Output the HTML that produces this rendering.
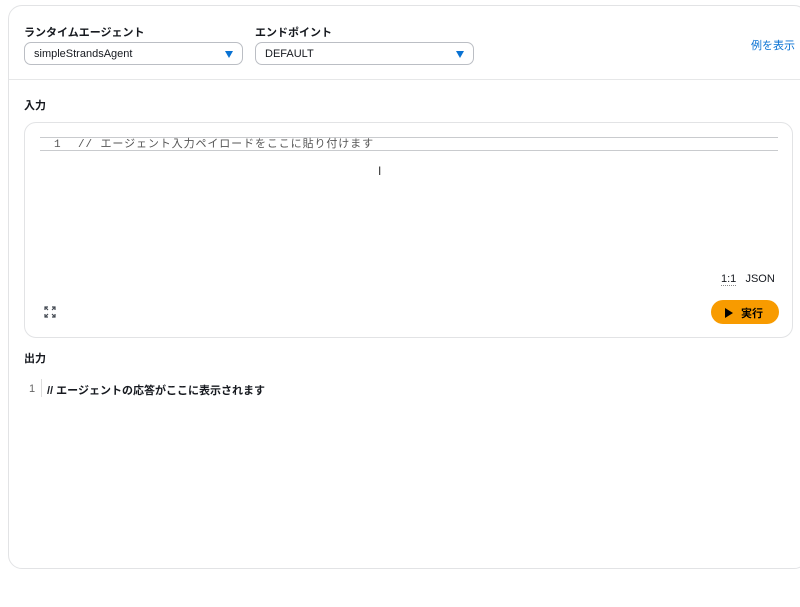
<!DOCTYPE html>
<html><head><meta charset="utf-8"><style>
*{box-sizing:border-box;margin:0;padding:0}
body{width:800px;height:607px;background:#fff;font-family:"Liberation Sans","Noto Sans CJK JP",sans-serif;color:#16191f;position:relative;overflow:hidden}
.card{position:absolute;left:8px;top:5px;width:800px;height:564px;border:1px solid #e2e3e5;border-radius:14px;background:#fff}
.hdr{position:absolute;left:0;top:0;right:0;height:74px;border-bottom:1px solid #e6e7e8}
.lbl{position:absolute;font-size:11px;font-weight:bold;color:#16191f}
.sel{position:absolute;height:23px;border:1px solid #bbbec4;border-radius:7px;font-size:11px;padding:5px 9px;background:#fff}
.tri{position:absolute;right:9px;top:8px;width:0;height:0;border-left:4.5px solid transparent;border-right:4.5px solid transparent;border-top:7px solid #0972d3}
.link{position:absolute;left:742px;top:31px;color:#0972d3;font-size:11px}
.ed{position:absolute;left:15px;top:116px;width:769px;height:216px;border:1px solid #e2e3e5;border-radius:12px}
.line{position:absolute;left:15px;top:14px;width:738px;height:14px;border-top:1px solid #c9cbce;border-bottom:1px solid #c9cbce;font-family:"Liberation Mono","Noto Sans CJK JP",monospace;font-size:11px;color:#555;line-height:14px;letter-spacing:0.9px}
.btn{position:absolute;left:702px;top:294px;width:68px;height:24px;border-radius:12px;background:#f89b00;font-size:11px;font-weight:bold;color:#000;padding:5px 0 0 14px}
</style></head><body>
<div class="card">
 <div class="hdr">
  <div class="lbl" style="left:15px;top:18px">ランタイムエージェント</div>
  <div class="sel" style="left:15px;top:36px;width:219px">simpleStrandsAgent<span class="tri"></span></div>
  <div class="lbl" style="left:246px;top:18px">エンドポイント</div>
  <div class="sel" style="left:246px;top:36px;width:219px">DEFAULT<span class="tri"></span></div>
  <div class="link">例を表示</div>
 </div>
 <div class="lbl" style="left:15px;top:91px">入力</div>
 <div class="ed">
  <div class="line"><span style="position:absolute;left:14px">1</span><span style="position:absolute;left:38px">// エージェント入力ペイロードをここに貼り付けます</span></div>
  <div style="position:absolute;left:353px;top:41px;font-size:12px;color:#333">I</div>
  <div style="position:absolute;left:696px;top:150px;font-size:11px"><span style="border-bottom:1px dotted #888">1:1</span>&nbsp;&nbsp; JSON</div>
  <svg style="position:absolute;left:19px;top:183px" width="12" height="12" viewBox="0 0 12 12" fill="none" stroke="#414750" stroke-width="1.2"><path d="M1 4V1h3M8 1h3v3M11 8v3H8M4 11H1V8M1 1l3 3M11 1L8 4M11 11L8 8M1 11l3-3"/></svg>
 </div>
 <div class="btn"><span style="display:inline-block;width:0;height:0;border-top:5px solid transparent;border-bottom:5px solid transparent;border-left:8px solid #000;vertical-align:-1px;margin-right:8px"></span>実行</div>
 <div class="lbl" style="left:15px;top:344px">出力</div>
 <div style="position:absolute;left:20px;top:377px;font-size:11px;color:#666">1</div>
 <div style="position:absolute;left:32px;top:373px;height:18px;border-left:1px solid #ddd"></div>
 <div style="position:absolute;left:38px;top:376px;font-size:11px;font-weight:600;color:#16191f">// エージェントの応答がここに表示されます</div>
</div>
</body></html>
